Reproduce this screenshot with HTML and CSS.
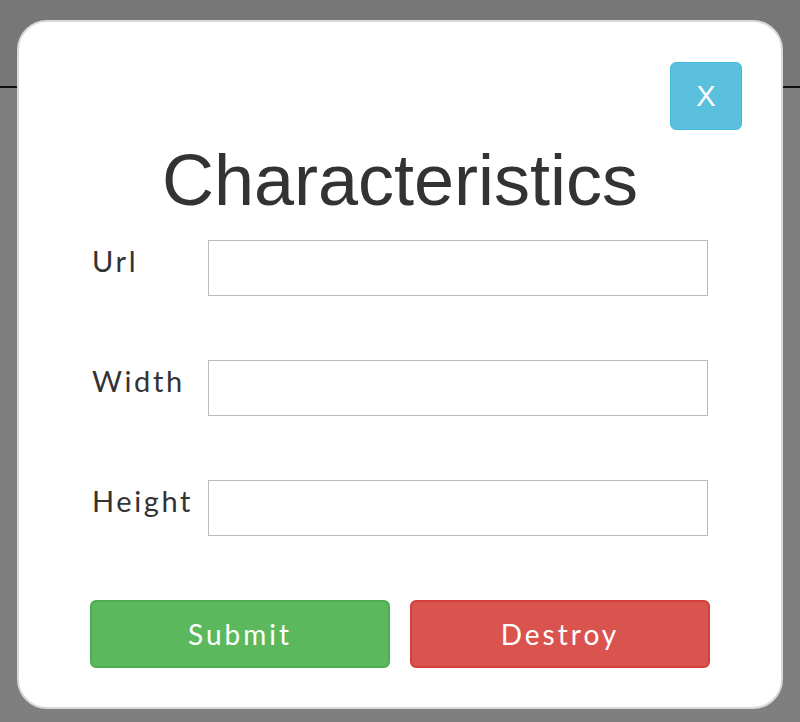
FILE: index.html
```html
<!DOCTYPE html>
<html>
<head>
<meta charset="utf-8">
<link rel="stylesheet" href="styles.css">
</head>
<body>
<div class="page">
  <div class="topbar"></div>
  <div class="backdrop">
    <div class="modal">
      <div class="modal-header">
        <button class="btn-close">X</button>
      </div>
      <h1 class="title">Characteristics</h1>
      <form class="form">
        <div class="row">
          <label class="label">Url</label>
          <input class="input" type="text">
        </div>
        <div class="row">
          <label class="label">Width</label>
          <input class="input" type="text">
        </div>
        <div class="row">
          <label class="label">Height</label>
          <input class="input" type="text">
        </div>
        <div class="actions">
          <button type="button" class="btn btn-submit">Submit</button>
          <button type="button" class="btn btn-destroy">Destroy</button>
        </div>
      </form>
    </div>
  </div>
</div>
</body>
</html>
```

FILE: styles.css
```css
html, body {
  margin: 0;
  padding: 0;
  height: 100%;
}
body {
  background: #7f7f7f;
  font-family: "Liberation Sans", Arial, sans-serif;
  overflow: hidden;
}
.page {
  position: relative;
  height: 722px;
}
.topbar {
  height: 86px;
  background: #777777;
  border-bottom: 2px solid #111;
}
.backdrop {
  position: absolute;
  top: 0;
  left: 0;
  right: 0;
  bottom: 0;
}
.modal {
  box-sizing: border-box;
  width: 766px;
  height: 689px;
  margin: 20px auto 0;
  background: #fff;
  border: 2px solid #d6dbd6;
  border-radius: 30px;
  padding: 40px 71px 39px 71px;
  display: flex;
  flex-direction: column;
}
.modal-header {
  display: flex;
  justify-content: flex-end;
  margin-right: -32px;
}
.btn-close {
  width: 72px;
  height: 68px;
  background: #5bc0de;
  border: 1px solid #46b8da;
  border-radius: 6px;
  color: #fff;
  font-family: "Liberation Sans", Arial, sans-serif;
  font-size: 29px;
  padding: 0;
  cursor: pointer;
}
.title {
  margin: 10px 0 20px;
  font-family: "Liberation Sans", Arial, sans-serif;
  font-weight: normal;
  font-size: 72px;
  line-height: 80px;
  color: #333;
  text-align: center;
}
.form {
  display: flex;
  flex-direction: column;
  gap: 64px;
}
.row {
  display: flex;
  align-items: flex-start;
  padding-left: 2px;
}
.label {
  width: 116px;
  flex: none;
  font-family: Lato, "Open Sans", sans-serif;
  font-size: 29px;
  line-height: 28px;
  letter-spacing: 2.6px;
  color: #333;
  padding-top: 7px;
  white-space: nowrap;
}
.input {
  box-sizing: border-box;
  width: 500px;
  height: 56px;
  border: 1px solid #bbbbbb;
  margin: 0;
  padding: 0 10px;
  font-size: 20px;
  outline: none;
}
.actions {
  display: flex;
  gap: 20px;
}
.btn {
  width: 300px;
  height: 68px;
  border-radius: 6px;
  color: #fff;
  font-family: Lato, "Open Sans", sans-serif;
  font-size: 28px;
  letter-spacing: 3px;
  padding: 0;
  cursor: pointer;
}
.btn-submit {
  background: #5cb85c;
  border: 2px solid #4cae4c;
}
.btn-destroy {
  background: #d9534f;
  border: 2px solid #d43f3a;
}
```
